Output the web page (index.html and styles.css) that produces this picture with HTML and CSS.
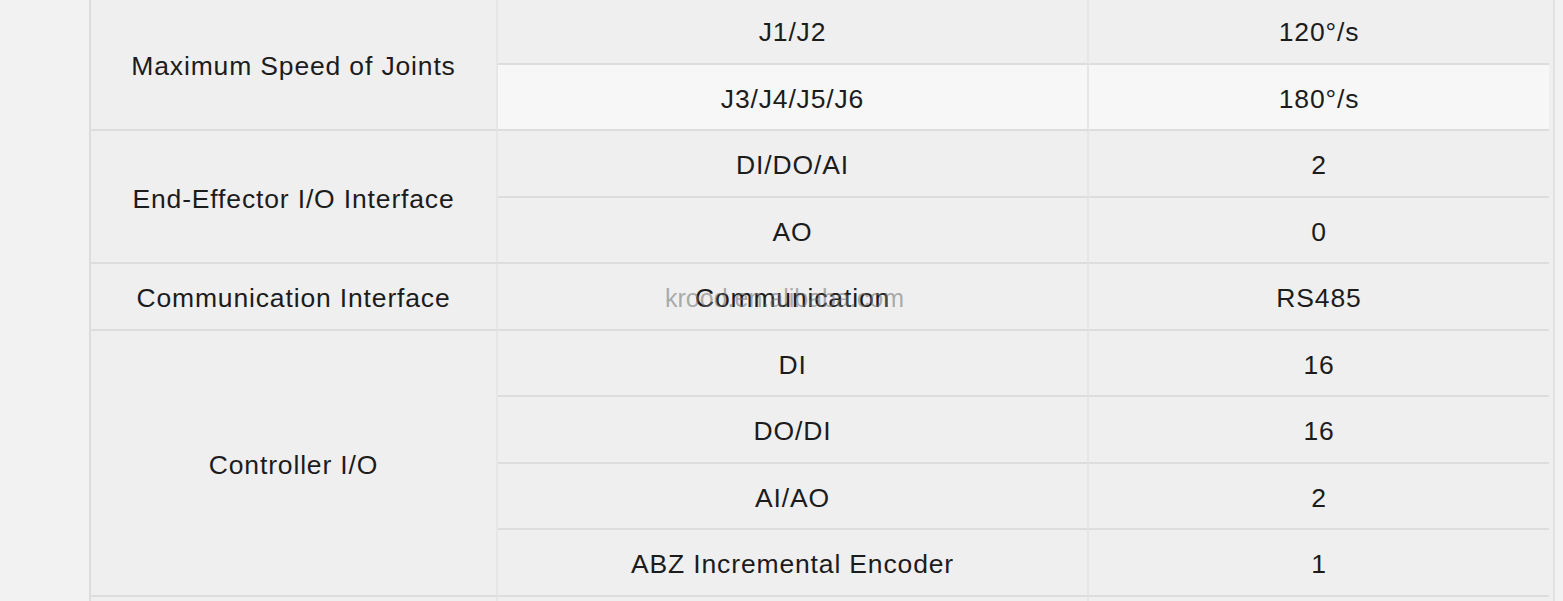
FILE: index.html
```html
<!DOCTYPE html>
<html>
<head>
<meta charset="utf-8">
<link rel="stylesheet" href="styles.css">
</head>
<body>
<div class="page">
  <div class="spec">
    <div class="cell c1" style="grid-row: span 2">Maximum Speed of Joints</div>
    <div class="cell">J1/J2</div>
    <div class="cell c3">120°/s</div>
    <div class="cell light">J3/J4/J5/J6</div>
    <div class="cell c3 light">180°/s</div>

    <div class="cell c1" style="grid-row: span 2">End-Effector I/O Interface</div>
    <div class="cell">DI/DO/AI</div>
    <div class="cell c3">2</div>
    <div class="cell">AO</div>
    <div class="cell c3">0</div>

    <div class="cell c1">Communication Interface</div>
    <div class="cell">Communication</div>
    <div class="cell c3">RS485</div>

    <div class="cell c1" style="grid-row: span 4">Controller I/O</div>
    <div class="cell">DI</div>
    <div class="cell c3">16</div>
    <div class="cell">DO/DI</div>
    <div class="cell c3">16</div>
    <div class="cell">AI/AO</div>
    <div class="cell c3">2</div>
    <div class="cell">ABZ Incremental Encoder</div>
    <div class="cell c3">1</div>

    <div class="cell c1"></div>
    <div class="cell"></div>
    <div class="cell c3"></div>

    <div class="watermark">krood.en.alibaba.com</div>
  </div>
</div>
</body>
</html>
```

FILE: styles.css
```css
html, body {
  margin: 0;
  padding: 0;
}
body {
  background: #f2f2f2;
  font-family: "Liberation Sans", Arial, sans-serif;
  color: #1c1c1c;
  height: 601px;
  overflow: hidden;
}
.page {
  display: flex;
  padding-left: 89px;
}
.spec {
  position: relative;
  margin-top: -2px;
  width: 1462px;
  display: grid;
  grid-template-columns: 407px 591px 460px;
  grid-auto-rows: 66.5px;
  border-left: 2px solid #dcdcdc;
  border-right: 2px solid #e2e2e2;
  background: #efefef;
}
.cell {
  display: flex;
  align-items: center;
  justify-content: center;
  padding-top: 5px;
  font-size: 26.5px;
  letter-spacing: 0.85px;
  background: #efefef;
  border-bottom: 2px solid #dddddd;
  border-right: 2px solid #e6e6e6;
  box-sizing: border-box;
  text-align: center;
}
.cell.c3 {
  border-right: none;
}
.cell.light {
  background: #f7f7f7;
}
.watermark {
  position: absolute;
  left: 574px;
  top: 286px;
  font-size: 25px;
  color: rgba(110, 110, 110, 0.55);
  letter-spacing: 0px;
  pointer-events: none;
}
```
